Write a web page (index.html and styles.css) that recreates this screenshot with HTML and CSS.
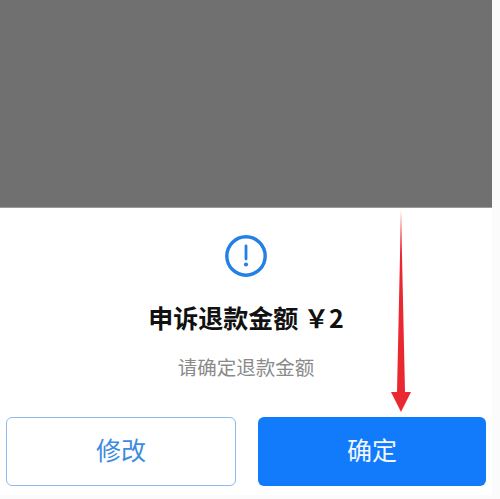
FILE: index.html
```html
<!DOCTYPE html>
<html lang="zh">
<head>
<meta charset="utf-8">
<title>申诉退款金额</title>
<link rel="stylesheet" href="styles.css">
</head>
<body>
<div class="screen">
  <div class="overlay"></div>
  <div class="sheet">
    <svg class="alert-icon" viewBox="0 0 42 42" aria-hidden="true">
      <circle cx="21" cy="21" r="19.2" fill="none" stroke="#2480e4" stroke-width="3.4"/>
      <path d="M21 11v13" stroke="#2480e4" stroke-width="2.8" stroke-linecap="round" fill="none"/>
      <circle cx="21" cy="29.5" r="2.1" fill="#2480e4"/>
    </svg>
    <h1 class="title">申诉退款金额 ￥2</h1>
    <p class="hint">请确定退款金额</p>
    <div class="actions">
      <button class="btn btn-outline">修改</button>
      <button class="btn btn-solid">确定</button>
    </div>
  </div>
  <svg class="arrow" viewBox="0 0 22 202" aria-hidden="true">
    <path d="M11 0 L15 182 L21 182 L11 202 L1 182 L7 182 Z" fill="#e9282f"/>
  </svg>
</div>
</body>
</html>
```
FILE: styles.css
```css
* { box-sizing: border-box; }
html, body { margin: 0; padding: 0; background: #fbfbfb; }
.screen {
  position: relative;
  width: 500px;
  height: 499px;
  overflow: hidden;
  font-family: "Noto Sans CJK SC", "Liberation Sans", sans-serif;
  padding-right: 8px;
  padding-bottom: 4px;
  display: flex;
  flex-direction: column;
}
.overlay {
  height: 208px;
  background: #707070;
  border-bottom: 1px solid #9a9a9a;
  flex: none;
}
.sheet {
  flex: 1;
  background: #fff;
  display: flex;
  flex-direction: column;
  align-items: center;
  padding-top: 27px;
}
.alert-icon { width: 42px; height: 42px; flex: none; }
.title {
  margin: 22px 0 0;
  font-size: 25px;
  line-height: 36px;
  font-weight: 700;
  color: #111;
}
.hint {
  margin: 18px 0 0;
  font-size: 19.5px;
  line-height: 28px;
  color: #8a8a8a;
}
.actions {
  display: flex;
  gap: 22px;
  width: 100%;
  padding: 0 6px;
  margin-top: 36px;
}
.btn {
  flex: 1;
  height: 69px;
  padding: 0 0 6px;
  border-radius: 6px;
  font-family: inherit;
  font-size: 25px;
}
.btn-outline { background: #fff; border: 1.5px solid #8dbcec; color: #3d8be0; }
.btn-solid { background: #127bfb; border: none; color: #f2f7ff; }
.arrow {
  position: absolute;
  left: 390px;
  top: 210px;
  width: 22px;
  height: 202px;
}
```
